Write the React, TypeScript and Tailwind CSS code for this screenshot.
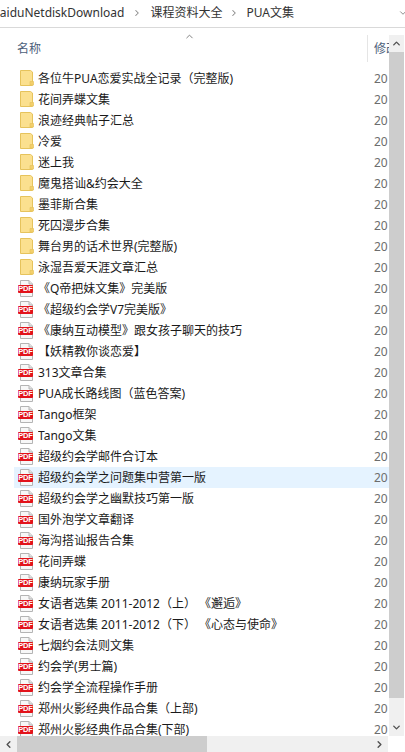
import { ChevronDown, ChevronRight, ChevronUp, ChevronLeft } from "lucide-react";

const folders = [
  "各位牛PUA恋爱实战全记录（完整版)",
  "花间弄蝶文集",
  "浪迹经典帖子汇总",
  "冷爱",
  "迷上我",
  "魔鬼搭讪&约会大全",
  "墨菲斯合集",
  "死囚漫步合集",
  "舞台男的话术世界(完整版)",
  "泳湿吾爱天涯文章汇总",
];

const pdfs = [
  "《Q帝把妹文集》完美版",
  "《超级约会学V7完美版》",
  "《康纳互动模型》跟女孩子聊天的技巧",
  "【妖精教你谈恋爱】",
  "313文章合集",
  "PUA成长路线图（蓝色答案)",
  "Tango框架",
  "Tango文集",
  "超级约会学邮件合订本",
  "超级约会学之问题集中营第一版",
  "超级约会学之幽默技巧第一版",
  "国外泡学文章翻译",
  "海沟搭讪报告合集",
  "花间弄蝶",
  "康纳玩家手册",
  "女语者选集 2011-2012（上） 《邂逅》",
  "女语者选集 2011-2012（下） 《心态与使命》",
  "七烟约会法则文集",
  "约会学(男士篇)",
  "约会学全流程操作手册",
  "郑州火影经典作品合集（上部)",
  "郑州火影经典作品合集(下部)",
];

const FolderIcon = () => (
  <svg width="14" height="17" viewBox="0 0 14 17" className="shrink-0">
    <path d="M0.5 0.5H10.5L12.5 2V15.5H0.5Z" fill="#fbe08f" stroke="#e6c35c" />
    <path d="M10 15V11.5H13.5V15Z" fill="#f3cf6b" stroke="#e6c35c" strokeWidth="0.7" />
  </svg>
);

const PdfIcon = () => (
  <div className="relative w-[16px] h-[17px] shrink-0">
    <svg width="16" height="17" viewBox="0 0 16 17" className="absolute left-0 top-0">
      <path d="M2.5 0.5H11L14.5 4V16.5H2.5Z" fill="#f7f7f7" stroke="#b4b4b4" />
      <path d="M11 0.5V4H14.5" fill="#e4e4e4" stroke="#b4b4b4" />
    </svg>
    <span className="absolute left-0 top-[5px] w-[15px] h-[8px] rounded-[1px] bg-[#e2131b] text-white text-[7.5px] leading-[8px] font-bold text-center tracking-[-0.2px] font-['Liberation_Sans',sans-serif]">
      PDF
    </span>
  </div>
);

const Row = ({ name, pdf, selected }: { name: string; pdf?: boolean; selected?: boolean }) => (
  <div className={`flex items-center h-[21px] shrink-0 ml-[14px] pl-[4px] gap-[4px] ${selected ? "bg-[#e5f3ff]" : ""}`}>
    <div className={`w-[16px] flex justify-center ${pdf ? "" : "pl-[1px]"}`}>{pdf ? <PdfIcon /> : <FolderIcon />}</div>
    <span className="flex-1 truncate text-[12px] text-[#1a1a1a] [text-spacing-trim:space-all]">{name}</span>
    <span className="w-[15px] overflow-hidden text-[12px] text-[#6d6d6d] shrink-0">20</span>
  </div>
);

export default function App() {
  return (
    <div className="w-[405px] h-[752px] bg-white flex flex-col overflow-hidden font-['Noto_Sans','Noto_Sans_CJK_SC',sans-serif]">
      <div className="h-[28px] shrink-0 border-b border-[#d9d9d9] flex items-center pb-[2px] text-[12px] text-[#333] whitespace-nowrap">
        <span className="-ml-[8px]">BaiduNetdiskDownload</span>
        <ChevronRight size={10} strokeWidth={2.5} className="mx-[8px] text-[#888]" />
        <span>课程资料大全</span>
        <ChevronRight size={10} strokeWidth={2.5} className="mx-[7px] text-[#888]" />
        <span>PUA文集</span>
        <ChevronDown size={10} className="ml-auto -mr-[3px] text-[#777]" />
      </div>

      <div className="flex flex-1 min-h-0">
        <div className="flex-1 min-w-0 flex flex-col">
          <div className="h-[40px] shrink-0 flex text-[12px] text-[#4c607a]">
            <div className="relative w-[367px] pl-[17px] pt-[12px]">
              <span>名称</span>
              <ChevronUp size={11} className="absolute left-[184px] top-[3px] text-[#777]" />
            </div>
            <div className="mt-[7px] h-[27px] border-l border-[#e5e5e5] pl-[6px] pt-[5px] overflow-hidden flex-1 whitespace-nowrap">修改</div>
          </div>
          <div className="flex-1 min-h-0 flex flex-col overflow-hidden">
            {folders.map((name) => (
              <Row key={name} name={name} />
            ))}
            {pdfs.map((name) => (
              <Row key={name} name={name} pdf selected={name === "超级约会学之问题集中营第一版"} />
            ))}
          </div>
        </div>
        <div className="w-[15px] mr-[1px] shrink-0 mt-[7px] flex flex-col">
          <div className="h-[17px] bg-[#f0f0f0] flex items-center justify-center">
            <ChevronUp size={11} strokeWidth={3} className="text-[#505050]" />
          </div>
          <div className="h-[646px] bg-[#cdcdcd]" />
          <div className="flex-1 bg-[#f0f0f0] flex items-end justify-center pb-[3px]">
            <ChevronDown size={11} strokeWidth={3} className="text-[#505050]" />
          </div>
        </div>
      </div>

      <div className="h-[16px] shrink-0 flex">
        <div className="w-[388px] bg-[#f0f0f0] flex items-center">
          <div className="w-[17px] flex justify-center">
            <ChevronLeft size={11} strokeWidth={3} className="text-[#505050]" />
          </div>
          <div className="w-[190px] h-full bg-[#cdcdcd]" />
          <ChevronRight size={11} strokeWidth={3} className="ml-auto mr-[3px] text-[#505050]" />
        </div>
      </div>
    </div>
  );
}
